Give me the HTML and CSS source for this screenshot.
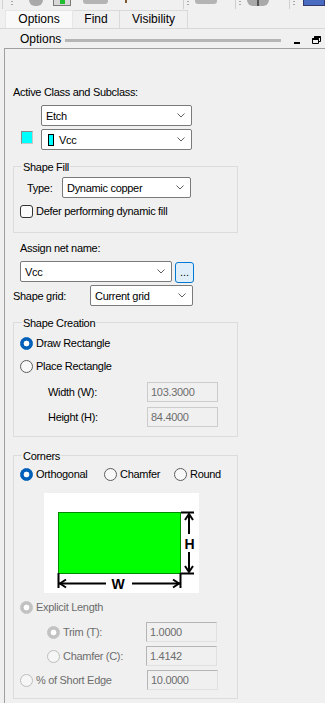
FILE: index.html
```html
<!DOCTYPE html>
<html lang="en">
<head>
  <meta charset="UTF-8" />
  <title>Options</title>
  <link rel="stylesheet" href="styles.css">
</head>
<body>

  <!-- Toolbar (cut off at the top) -->
  <div class="toolbar">
    <span class="tb-edge"></span>
    <span class="grip g1"></span>
    <span class="tb-blob b1"></span>
    <span class="tb-icon"><span class="tb-green"></span></span>
    <span class="tb-bar r1"></span>
    <span class="tb-dot"></span>
    <span class="tb-sep s1"></span>
    <span class="grip"></span>
    <span class="tb-bar r2"></span>
    <span class="tb-sep s2"></span>
    <span class="grip"></span>
    <span class="tb-blob b2"><span class="tb-pin"></span></span>
    <span class="tb-sep s3"></span>
    <span class="grip"></span>
    <span class="tb-blue"></span>
  </div>

  <!-- Tabs -->
  <div class="tabs">
    <div class="tab active tab-options">Options</div>
    <div class="tab tab-find">Find</div>
    <div class="tab tab-vis">Visibility</div>
  </div>

  <div class="titlebar">
    <span class="title">Options</span>
    <span class="title-line"></span>
    <svg class="win-btn" width="30" height="12" viewBox="0 0 30 12">
      <rect x="1" y="8" width="6" height="2" fill="#000"/>
      <path d="M19.5 4.5h6v5h-6z M21.5 4.5v-2h6v5h-2" fill="none" stroke="#000" stroke-width="1"/>
      <path d="M19.5 5h6 M21.5 3h6" stroke="#000" stroke-width="2"/>
    </svg>
  </div>

  <div class="panel">

    <div class="label lbl-active">Active Class and Subclass:</div>

    <div class="row row-etch">
      <div class="select sel-class">
        <span class="val">Etch</span>
        <svg class="chev" width="8" height="5" viewBox="0 0 8 5"><path d="M0.5 0.5L4 4L7.5 0.5" fill="none" stroke="#5f5f5f"/></svg>
      </div>
    </div>

    <div class="row row-sub">
      <span class="swatch"></span>
      <div class="select sel-class">
        <span class="chip"></span>
        <span class="val">Vcc</span>
        <svg class="chev" width="8" height="5" viewBox="0 0 8 5"><path d="M0.5 0.5L4 4L7.5 0.5" fill="none" stroke="#5f5f5f"/></svg>
      </div>
    </div>

    <!-- Shape Fill -->
    <div class="group grp-fill">
      <div class="group-title">Shape Fill</div>
      <div class="row row-type">
        <span class="label type-lbl">Type:</span>
        <div class="select sel-type">
          <span class="val">Dynamic copper</span>
          <svg class="chev" width="8" height="5" viewBox="0 0 8 5"><path d="M0.5 0.5L4 4L7.5 0.5" fill="none" stroke="#5f5f5f"/></svg>
        </div>
      </div>
      <div class="row opt row-defer">
        <span class="checkbox"></span>
        <span class="label">Defer performing dynamic fill</span>
      </div>
    </div>

    <div class="label lbl-net">Assign net name:</div>
    <div class="row row-net">
      <div class="select sel-net">
        <span class="val">Vcc</span>
        <svg class="chev" width="8" height="5" viewBox="0 0 8 5"><path d="M0.5 0.5L4 4L7.5 0.5" fill="none" stroke="#5f5f5f"/></svg>
      </div>
      <button class="browse">...</button>
    </div>

    <div class="row row-grid">
      <span class="label grid-lbl">Shape grid:</span>
      <div class="select sel-grid">
        <span class="val">Current grid</span>
        <svg class="chev" width="8" height="5" viewBox="0 0 8 5"><path d="M0.5 0.5L4 4L7.5 0.5" fill="none" stroke="#5f5f5f"/></svg>
      </div>
    </div>

    <!-- Shape Creation -->
    <div class="group grp-create">
      <div class="group-title">Shape Creation</div>
      <div class="row opt row-draw">
        <span class="radio on"></span>
        <span class="label">Draw Rectangle</span>
      </div>
      <div class="row opt row-place">
        <span class="radio"></span>
        <span class="label">Place Rectangle</span>
      </div>
      <div class="row field row-width">
        <span class="label field-lbl">Width (W):</span>
        <span class="input">103.3000</span>
      </div>
      <div class="row field row-height">
        <span class="label field-lbl">Height (H):</span>
        <span class="input">84.4000</span>
      </div>
    </div>

    <!-- Corners -->
    <div class="group grp-corners">
      <div class="group-title">Corners</div>
      <div class="row opt row-corners">
        <span class="radio on"></span>
        <span class="label c-orth">Orthogonal</span>
        <span class="radio"></span>
        <span class="label c-cham">Chamfer</span>
        <span class="radio"></span>
        <span class="label">Round</span>
      </div>

      <svg class="preview" width="155" height="100" viewBox="0 0 155 100">
        <rect x="0" y="0" width="155" height="100" fill="#fff"/>
        <rect x="14.5" y="19.5" width="122" height="61" fill="#00ff00" stroke="#008a00"/>
        <g stroke="#000" stroke-width="2" fill="none">
          <path d="M137 19.5h13 M137 80.5h13"/>
          <path d="M145 21v20 M145 59v20"/>
          <path d="M141 27l4-6l4 6 M141 73l4 6l4-6"/>
          <path d="M14.5 80v15 M136.5 80v15"/>
          <path d="M15 90.5h47 M88 90.5h48"/>
          <path d="M22 86.5l-6 4l6 4 M129 86.5l6 4l-6 4"/>
        </g>
        <text x="145.5" y="56" class="dim">H</text>
        <text x="74" y="96" class="dim">W</text>
      </svg>

      <div class="row opt off row-explicit">
        <span class="radio on"></span>
        <span class="label">Explicit Length</span>
      </div>
      <div class="row field off row-trim">
        <span class="radio on"></span>
        <span class="label sub-lbl">Trim (T):</span>
        <span class="input">1.0000</span>
      </div>
      <div class="row field off row-chamfer">
        <span class="radio"></span>
        <span class="label sub-lbl">Chamfer (C):</span>
        <span class="input">1.4142</span>
      </div>
      <div class="row field off row-short">
        <span class="radio"></span>
        <span class="label short-lbl">% of Short Edge</span>
        <span class="input">10.0000</span>
      </div>
    </div>

  </div>

</body>
</html>
```

FILE: styles.css
```css
body {
  margin: 0;
  background: #f0f0f0;
  font-family: "Liberation Sans", Arial, sans-serif;
  font-size: 11px;
  color: #000;
  width: 325px;
  height: 703px;
  overflow: hidden;
}

/* Toolbar strip (only its bottom shows) */
.toolbar {
  height: 9px;
  display: flex;
  align-items: flex-start;
  overflow: hidden;
}
.tb-edge {
  width: 1px;
  height: 9px;
  margin-left: 2px;
  background: #d2d2d2;
}
.grip {
  width: 2px;
  height: 6px;
  margin-left: 3px;
  margin-top: 1px;
  background: repeating-linear-gradient(#a8a8a8 0 1px, transparent 1px 3px);
}
.g1 { margin-left: 8px; }
.tb-blob {
  height: 6px;
  background: #a9a9a9;
  border-radius: 0 0 7px 7px;
}
.b1 { width: 14px; margin-left: 16px; }
.b2 { width: 22px; margin-left: 6px; display: flex; justify-content: center; }
.tb-pin { width: 2px; height: 6px; background: #555; }
.tb-icon {
  width: 16px;
  height: 5px;
  margin-left: 10px;
  border: 1px solid #7a7a7a;
  border-top: none;
  background: #d8d8d8;
  display: flex;
  justify-content: center;
}
.tb-green { width: 5px; height: 4px; background: #1fbf2f; }
.tb-bar {
  height: 4px;
  background: #b4b4b4;
  border-radius: 0 0 3px 3px;
}
.r1 { width: 25px; margin-left: 12px; }
.r2 { width: 22px; margin-left: 6px; }
.tb-dot { width: 2px; height: 3px; margin-left: 17px; background: #7a5a30; }
.tb-sep { width: 1px; height: 9px; background: #cfcfcf; }
.s1 { margin-left: 56px; }
.s2 { margin-left: 18px; }
.s3 { margin-left: 20px; }
.tb-blue {
  width: 20px;
  height: 5px;
  margin-left: 8px;
  background: #4a6cc0;
  border: 1px solid #303a70;
  border-top: none;
}

/* Tabs */
.tabs {
  display: flex;
  align-items: flex-end;
  height: 19px;
  padding-left: 5px;
  border-bottom: 1px solid #d9d9d9;
  font-size: 12px;
}
.tab {
  box-sizing: border-box;
  height: 18px;
  line-height: 17px;
  text-align: center;
  border: 1px solid #d9d9d9;
  border-bottom: none;
  background: #f0f0f0;
}
.tab.active {
  background: #f9f9f9;
  border-color: #e6e6e6;
}
.tab-options { width: 68px; }
.tab-find { width: 47px; border-left: none; }
.tab-vis { width: 68px; border-left: none; }

/* Docked title */
.titlebar {
  height: 19px;
  display: flex;
  align-items: center;
  font-size: 12px;
}
.title {
  margin-left: 20px;
  line-height: 14px;
}
.title-line {
  width: 216px;
  height: 3px;
  margin-left: 4px;
  margin-top: 3px;
  background: #b5b5b5;
}
.win-btn { margin-left: 12px; margin-top: 2px; }

/* Panel */
.panel {
  box-sizing: border-box;
  margin-left: 4px;
  height: 655px;
  padding-left: 8px;
  border-top: 1px solid #a0a0a0;
  border-left: 1px solid #a0a0a0;
  letter-spacing: -0.3px;
}
.label {
  line-height: 14px;
  white-space: nowrap;
}
.row {
  display: flex;
  align-items: center;
}
.lbl-active { margin-top: 36px; }
.row-etch { margin-top: 6px; padding-left: 28px; }
.row-sub { margin-top: 3px; padding-left: 8px; align-items: flex-start; }

.select {
  box-sizing: border-box;
  height: 21px;
  display: flex;
  align-items: center;
  background: #fff;
  border: 1px solid #7a7a7a;
  border-radius: 2px;
  padding-left: 4px;
}
.select .val { flex: 1; line-height: 14px; white-space: nowrap; }
.chev { margin-right: 6px; }
.sel-class { width: 151px; }
.swatch {
  box-sizing: border-box;
  width: 12px;
  height: 13px;
  margin-top: 2px;
  margin-right: 8px;
  background: #00ffff;
  border: 1px solid #8a8a8a;
  border-right-color: #c8c8c8;
  border-bottom-color: #c8c8c8;
}
.chip {
  box-sizing: border-box;
  width: 6px;
  height: 12px;
  margin-left: 2px;
  margin-right: 5px;
  background: #00ffff;
  border: 1px solid #000;
}

/* Groups */
.group {
  box-sizing: border-box;
  width: 225px;
  border: 1px solid #dcdcdc;
  padding-left: 6px;
}
.group-title {
  width: fit-content;
  margin-top: -7px;
  margin-left: 2px;
  padding: 0 1px;
  line-height: 14px;
  background: #f0f0f0;
}
.grp-fill { margin-top: 16px; padding-bottom: 14px; }
.row-type { margin-top: 3px; }
.type-lbl { margin-left: 7px; width: 35px; }
.sel-type { width: 129px; }
.row-defer { margin-top: 6px; }
.checkbox {
  box-sizing: border-box;
  width: 13px;
  height: 13px;
  margin-right: 3px;
  border: 1px solid #333;
  border-radius: 3px;
  background: #fbfbfb;
}
.opt { height: 14px; }

.lbl-net { margin-top: 8px; margin-left: 7px; }
.row-net { margin-top: 6px; padding-left: 7px; align-items: flex-start; }
.sel-net { width: 152px; }
.browse {
  box-sizing: border-box;
  width: 19px;
  height: 21px;
  margin: 1px 0 0 3px;
  padding: 0;
  background: #e0eef9;
  border: 1px solid #0078d4;
  border-radius: 3px;
  font: 11px "Liberation Sans", Arial, sans-serif;
  line-height: 15px;
  color: #000;
}
.row-grid { margin-top: 2px; }
.grid-lbl { width: 77px; }
.sel-grid { width: 103px; }

/* Radio buttons */
.radio {
  box-sizing: border-box;
  width: 13px;
  height: 13px;
  margin-right: 3px;
  border-radius: 50%;
  border: 1px solid #5c5c5c;
  background: #f8f8f8;
}
.radio.on {
  border-color: #005fb8;
  background: radial-gradient(circle, #fff 0 2.6px, #005fb8 3.2px);
}
.off .label { color: #6d6d6d; }
.off .radio { border-color: #bdbdbd; background: #f6f6f6; }
.off .radio.on {
  border-color: #c2c2c2;
  background: radial-gradient(circle, #fff 0 2.6px, #c2c2c2 3.2px);
}

.grp-create { margin-top: 16px; padding-bottom: 9px; }
.row-draw { margin-top: 6px; }
.row-place { margin-top: 9px; }
.field { height: 20px; }
.row-width { margin-top: 9px; }
.row-height { margin-top: 5px; }
.field-lbl { margin-left: 28px; width: 99px; }
.input {
  box-sizing: border-box;
  width: 71px;
  height: 20px;
  padding-left: 3px;
  line-height: 18px;
  color: #6d6d6d;
  background: #f0f0f0;
  border: 1px solid #cccccc;
}
.off .input {
  border-color: #b5b5b5 #e0e0e0 #e0e0e0 #b5b5b5;
}

.grp-corners { margin-top: 18px; padding-bottom: 8px; }
.row-corners { margin-top: 4px; }
.c-orth { width: 68px; }
.c-cham { width: 54px; }
.preview { display: block; margin: 12px 0 0 24px; }
.dim {
  font: bold 14px "Liberation Sans", Arial, sans-serif;
  text-anchor: middle;
}
.row-explicit { margin-top: 7px; }
.row-trim { margin-top: 8px; padding-left: 27px; }
.row-chamfer { margin-top: 4px; padding-left: 27px; }
.row-short { margin-top: 4px; }
.sub-lbl { width: 83px; }
.short-lbl { width: 111px; }
```
